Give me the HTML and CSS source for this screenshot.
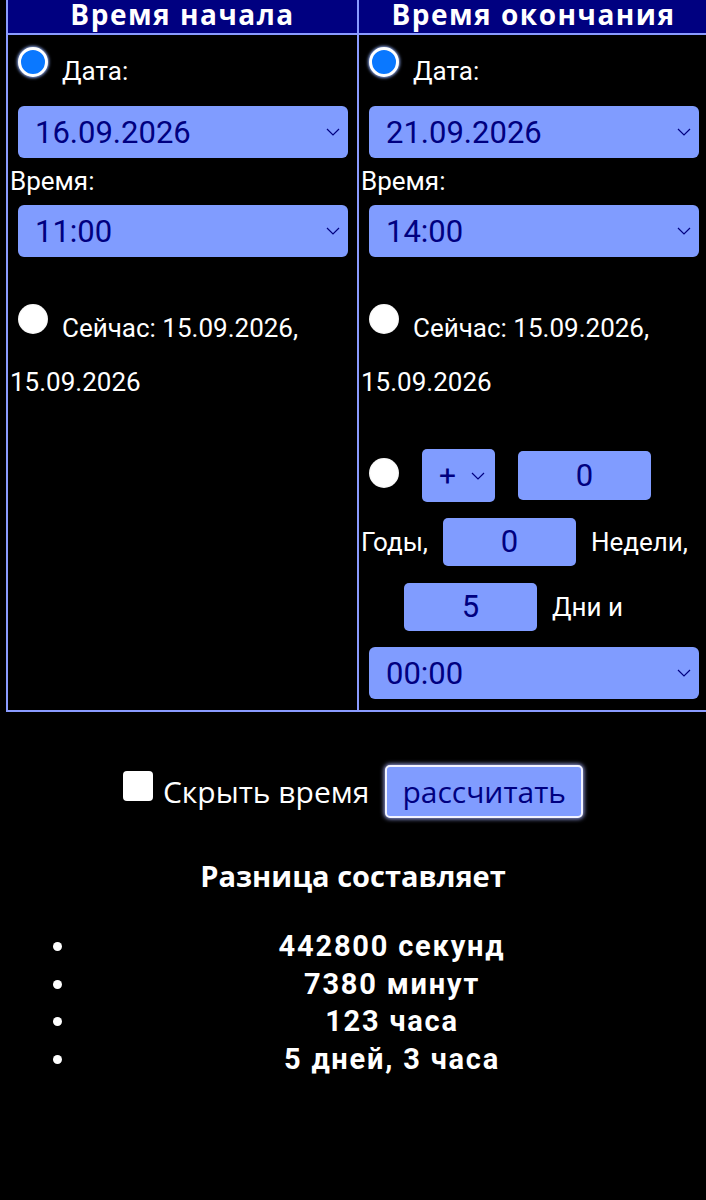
FILE: index.html
```html
<!DOCTYPE html>
<html lang="ru">
<head>
<meta charset="utf-8">
<title>Разница между датами</title>
<link rel="stylesheet" href="styles.css">
</head>
<body>
<div class="period">
  <div class="head">Время начала</div>
  <div class="head head-last">Время окончания</div>

  <div class="cell">
    <div class="opt-row opt-date"><span class="radio checked"></span><span class="lbl">Дата:</span></div>
    <div class="select sel-date"><span>16.09.2026</span><svg class="chev" viewBox="0 0 14 8" width="14" height="8"><path d="M1 1 L7 7 L13 1"/></svg></div>
    <div class="caption cap-time">Время:</div>
    <div class="select sel-time"><span>11:00</span><svg class="chev" viewBox="0 0 14 8" width="14" height="8"><path d="M1 1 L7 7 L13 1"/></svg></div>
    <div class="opt-row opt-now"><span class="radio"></span><span class="lbl">Сейчас: 15.09.2026,</span></div>
    <div class="caption now-date">15.09.2026</div>
  </div>

  <div class="cell cell-last">
    <div class="opt-row opt-date"><span class="radio checked"></span><span class="lbl">Дата:</span></div>
    <div class="select sel-date"><span>21.09.2026</span><svg class="chev" viewBox="0 0 14 8" width="14" height="8"><path d="M1 1 L7 7 L13 1"/></svg></div>
    <div class="caption cap-time">Время:</div>
    <div class="select sel-time"><span>14:00</span><svg class="chev" viewBox="0 0 14 8" width="14" height="8"><path d="M1 1 L7 7 L13 1"/></svg></div>
    <div class="opt-row opt-now"><span class="radio"></span><span class="lbl">Сейчас: 15.09.2026,</span></div>
    <div class="caption now-date">15.09.2026</div>

    <div class="rel-row">
      <span class="radio rel-radio"></span>
      <div class="sign"><span>+</span><svg class="chev" viewBox="0 0 14 8" width="14" height="8"><path d="M1 1 L7 7 L13 1"/></svg></div>
      <div class="num num-years">0</div>
    </div>
    <div class="words words-weeks"><span>Годы,</span><div class="num">0</div><span>Недели,</span></div>
    <div class="words words-days"><div class="num">5</div><span>Дни и</span></div>
    <div class="select sel-rel"><span>00:00</span><svg class="chev" viewBox="0 0 14 8" width="14" height="8"><path d="M1 1 L7 7 L13 1"/></svg></div>
  </div>
</div>

<div class="controls">
  <span class="checkbox"></span>
  <span class="hide-lbl">Скрыть время</span>
  <button class="calc" type="button">рассчитать</button>
</div>

<h2 class="result-title">Разница составляет</h2>
<ul class="results">
  <li>442800 секунд</li>
  <li>7380 минут</li>
  <li>123 часа</li>
  <li>5 дней, 3 часа</li>
</ul>
</body>
</html>
```
FILE: styles.css
```css
html {
  overflow-x: hidden;
  background: #000;
}
body {
  margin: 0;
  background: #000;
  color: #fff;
  font-family: Roboto, "Noto Sans", sans-serif;
}

.period {
  display: grid;
  grid-template-columns: 351px 353px;
  width: 704px;
  margin-left: 6px;
}
.head {
  box-sizing: border-box;
  height: 35px;
  background: #000080;
  border-left: 2px solid #8a9bff;
  border-bottom: 2px solid #8a9bff;
  font-family: "Open Sans", sans-serif;
  font-weight: 700;
  font-size: 28px;
  line-height: 29px;
  letter-spacing: 1.5px;
  text-align: center;
  white-space: nowrap;
}
.head-last {
  border-right: 2px solid #8a9bff;
}
.cell {
  box-sizing: border-box;
  border-left: 2px solid #8a9bff;
  border-bottom: 2px solid #8a9bff;
  padding: 0 0 11px 2px;
}
.cell-last {
  border-right: 2px solid #8a9bff;
}

.opt-row {
  display: flex;
  align-items: flex-start;
  padding-left: 8px;
}
.opt-date { margin-top: 12px; }
.opt-now { margin-top: 47px; }
.lbl {
  margin: 9px 0 0 14px;
  font-size: 26px;
  line-height: 30px;
}
.radio {
  flex: none;
  box-sizing: border-box;
  width: 30px;
  height: 30px;
  border-radius: 50%;
  background: radial-gradient(circle, #fff 62%, #e4e4e4 80%, #8d8d8d 100%);
}
.radio.checked {
  background: #0a78ff;
  border: 3.5px solid #fff;
  box-shadow: 0 0 3px 1px rgba(150, 180, 255, 0.9);
}

.select {
  box-sizing: border-box;
  display: flex;
  align-items: center;
  justify-content: space-between;
  height: 52px;
  margin: 20px 9px 0 8px;
  padding: 0 8px 0 17px;
  background: #809cff;
  border-radius: 6px;
  color: #000080;
  font-size: 31px;
}
.chev {
  fill: none;
  stroke: #000080;
  stroke-width: 1.2;
}
.caption {
  font-size: 26px;
  line-height: 30px;
}
.cap-time { margin-top: 8px; }
.select.sel-time { margin-top: 9px; }
.now-date { margin-top: 24px; }

.rel-row {
  display: flex;
  align-items: center;
  margin-top: 52px;
  padding-left: 8px;
}
.rel-radio {
  margin-bottom: 5px;
}
.sign {
  box-sizing: border-box;
  display: flex;
  align-items: center;
  justify-content: space-between;
  width: 73px;
  height: 53px;
  margin-left: 23px;
  padding: 0 10px 0 17px;
  background: #809cff;
  border-radius: 5px;
  color: #000080;
  font-size: 30px;
}
.num {
  flex: none;
  width: 133px;
  height: 48px;
  border-radius: 5px;
  background: #809cff;
  color: #000080;
  font-size: 31px;
  line-height: 48px;
  text-align: center;
}
.num-years {
  height: 49px;
  line-height: 49px;
  margin-left: 23px;
}
.words {
  display: flex;
  align-items: center;
  gap: 15px;
  font-size: 26px;
  line-height: 30px;
}
.words-weeks { margin-top: 16px; }
.words-days {
  margin-top: 17px;
  padding-left: 43px;
}
.select.sel-rel { margin-top: 16px; }

.controls {
  display: flex;
  justify-content: center;
  align-items: center;
  margin-top: 53px;
}
.checkbox {
  width: 30px;
  height: 30px;
  margin-bottom: 11px;
  background: #fff;
  border-radius: 4px;
}
.hide-lbl {
  margin-left: 10px;
  font-family: "Open Sans", sans-serif;
  font-size: 30px;
}
.calc {
  box-sizing: border-box;
  height: 53px;
  margin-left: 16px;
  padding: 0 15px;
  background: #809cff;
  border: 2px solid #f2f3ff;
  border-radius: 5px;
  box-shadow: 0 0 4px 1px rgba(170, 180, 255, 0.9);
  color: #000080;
  font-family: "Open Sans", sans-serif;
  font-size: 30px;
}

.result-title {
  margin: 40px 0 0;
  text-align: center;
  font-family: "Open Sans", sans-serif;
  font-weight: 700;
  font-size: 29px;
  line-height: 36px;
}
.results {
  margin: 34px 0 0;
  padding-left: 78px;
  font-weight: 700;
  font-size: 29px;
  line-height: 37.7px;
  letter-spacing: 1.8px;
  text-align: center;
}
```
